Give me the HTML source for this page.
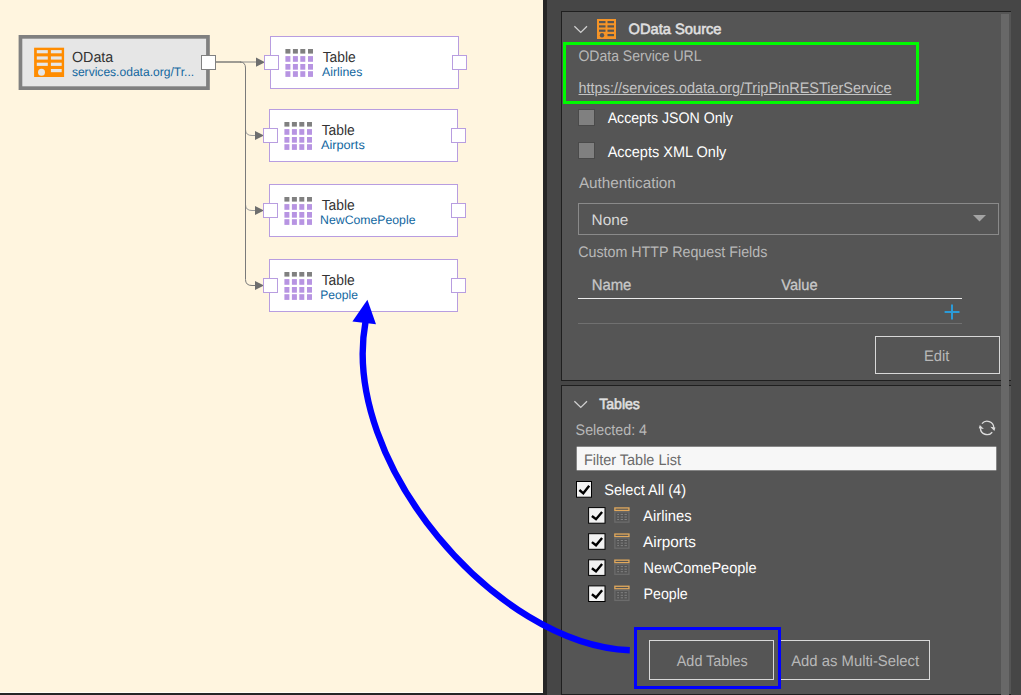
<!DOCTYPE html>
<html><head><meta charset="utf-8">
<style>
html,body{margin:0;padding:0;}
body{text-rendering:geometricPrecision;width:1021px;height:695px;position:relative;overflow:hidden;background:#262626;font-family:"Liberation Sans",sans-serif;}
.abs{position:absolute;transform-origin:0 0;}
#canvas{left:0;top:0;width:543px;height:692px;background:#fff5df;border-bottom:1px solid #fffdf6;}
#side{left:547px;top:0;width:474px;height:695px;background:#464646;}
.panel{background:#555555;border:1px solid #1f1f1f;border-right:none;box-sizing:border-box;}
.node{box-sizing:border-box;background:#fff;border:1px solid #b89de0;}
.port{box-sizing:border-box;width:15px;height:15px;background:#fff;border:1px solid #b89de0;}
.t1{font-size:14.7px;color:#333;white-space:nowrap;line-height:18px;}
.t2{font-size:12.3px;color:#12679f;white-space:nowrap;line-height:18px;}
.lbl{color:#b8b8b8;font-size:15.3px;white-space:nowrap;line-height:18px;}
.wht{color:#ffffff;font-size:15.3px;white-space:nowrap;line-height:18px;}
.hdr{font-size:14.9px;font-weight:normal;-webkit-text-stroke:0.55px #e0e0e0;color:#e0e0e0;line-height:18px;white-space:nowrap;}
.cb0{box-sizing:border-box;width:17px;height:17px;background:#808080;border:1px solid #4a4a4a;}
.btn{box-sizing:border-box;border:1px solid #d8d8d8;}
.btxt{color:#b8b8b8;font-size:15.3px;white-space:nowrap;line-height:18px;}
</style></head><body>
<div id="canvas" class="abs"></div>
<div id="side" class="abs"></div>
<svg class="abs" style="left:0;top:0" width="543" height="692" viewBox="0 0 543 692">
<g fill="none" stroke="#7a7a7a" stroke-width="1">
<path d="M216 62 H241" stroke="#6a6a6a" stroke-width="1.3"/><path d="M241 62 H258" stroke="#8a8a8a"/>
<path d="M240 62 Q245.5 62 245.5 68 V129.5"/><path d="M245.5 129.5 Q245.5 135.5 252 135.5 H258" stroke="#9c9c9c"/>
<path d="M245.5 129 V204.5"/><path d="M245.5 204.5 Q245.5 210.5 252 210.5 H258" stroke="#9c9c9c"/>
<path d="M245.5 204 V279.5 Q245.5 285.5 252 285.5 H258"/>
</g>
<g fill="#6e6e6e">
<path d="M256 57.6 L265 62.2 L256 66.8Z"/>
<path d="M255 131 L264 135.5 L255 140Z"/>
<path d="M255 206 L264 210.5 L255 215Z"/>
<path d="M255 281 L264 285.5 L255 290Z"/>
</g>
</svg>
<svg class="abs" style="left:0;top:0" width="230" height="100" viewBox="0 0 230 100"><rect x="20.45" y="36.85" width="187.5" height="51.3" fill="#e6e6e6" stroke="#808080" stroke-width="3.7"/></svg>
<svg class="abs" style="left:0;top:0" width="100" height="100" viewBox="0 0 100 100"><g transform="translate(34.1 47.7)">
<rect width="30" height="29.3" fill="#ff8c00"/>
<g fill="#e6e6e6">
<rect x="2.7" y="2.4" width="11" height="3.2"/><rect x="16.8" y="2.4" width="10.8" height="3.2"/>
<rect x="2.7" y="8.7" width="11" height="3.2"/><rect x="16.8" y="8.7" width="10.8" height="3.2"/>
<rect x="2.7" y="15" width="11" height="3.2"/><rect x="16.8" y="15" width="10.8" height="3.2"/>
<rect x="16.8" y="21.3" width="10.8" height="3.2"/>
<circle cx="7.4" cy="24.5" r="3.5"/>
</g></g></svg>
<div id="od1" class="abs tx t1" style="left:71px;top:49px;transform:translate(0.98px,0) scaleX(0.9732);">OData</div>
<div id="od2" class="abs tx t2" style="left:71px;top:63px;transform:translate(0.88px,0) scaleX(0.9809);">services.odata.org/Tr...</div>
<div class="abs port" style="left:201px;top:55px;border-color:#808080;"></div>
<div class="abs node" style="left:270px;top:36px;width:189px;height:53px;"></div>
<div class="abs port" style="left:263.5px;top:55px;"></div>
<div class="abs port" style="left:451.5px;top:55px;"></div>
<svg class="abs" style="left:285px;top:49.1px" width="28.2" height="28" viewBox="0 0 28.2 28">
<g fill="#808080"><rect x="0.4" y="0" width="5" height="4.6"/><rect x="7.9" y="0" width="5" height="4.6"/><rect x="15.3" y="0" width="5" height="4.6"/><rect x="23" y="0" width="5" height="4.6"/></g>
<g fill="#b794e2"><rect x="0.4" y="7.1" width="5" height="5.7"/><rect x="7.9" y="7.1" width="5" height="5.7"/><rect x="15.3" y="7.1" width="5" height="5.7"/><rect x="23" y="7.1" width="5" height="5.7"/><rect x="0.4" y="15" width="5" height="5.7"/><rect x="7.9" y="15" width="5" height="5.7"/><rect x="15.3" y="15" width="5" height="5.7"/><rect x="23" y="15" width="5" height="5.7"/><rect x="0.4" y="22.2" width="5" height="5.7"/><rect x="7.9" y="22.2" width="5" height="5.7"/><rect x="15.3" y="22.2" width="5" height="5.7"/><rect x="23" y="22.2" width="5" height="5.7"/></g></svg>
<div id="tb0" class="abs tx t1" style="left:322px;top:49px;transform:translate(0.64px,0) scaleX(0.9425);">Table</div>
<div id="tn0" class="abs tx t2" style="left:322px;top:63px;transform:translate(0.05px,0) scaleX(0.9990);">Airlines</div>
<div class="abs node" style="left:269px;top:109px;width:189px;height:53px;"></div>
<div class="abs port" style="left:262.5px;top:128px;"></div>
<div class="abs port" style="left:450.5px;top:128px;"></div>
<svg class="abs" style="left:284px;top:122.1px" width="28.2" height="28" viewBox="0 0 28.2 28">
<g fill="#808080"><rect x="0.4" y="0" width="5" height="4.6"/><rect x="7.9" y="0" width="5" height="4.6"/><rect x="15.3" y="0" width="5" height="4.6"/><rect x="23" y="0" width="5" height="4.6"/></g>
<g fill="#b794e2"><rect x="0.4" y="7.1" width="5" height="5.7"/><rect x="7.9" y="7.1" width="5" height="5.7"/><rect x="15.3" y="7.1" width="5" height="5.7"/><rect x="23" y="7.1" width="5" height="5.7"/><rect x="0.4" y="15" width="5" height="5.7"/><rect x="7.9" y="15" width="5" height="5.7"/><rect x="15.3" y="15" width="5" height="5.7"/><rect x="23" y="15" width="5" height="5.7"/><rect x="0.4" y="22.2" width="5" height="5.7"/><rect x="7.9" y="22.2" width="5" height="5.7"/><rect x="15.3" y="22.2" width="5" height="5.7"/><rect x="23" y="22.2" width="5" height="5.7"/></g></svg>
<div id="tb1" class="abs tx t1" style="left:321px;top:122px;transform:translate(0.64px,0) scaleX(0.9425);">Table</div>
<div id="tn1" class="abs tx t2" style="left:320px;top:136px;transform:translate(0.92px,0) scaleX(1.0347);">Airports</div>
<div class="abs node" style="left:269px;top:184px;width:189px;height:53px;"></div>
<div class="abs port" style="left:262.5px;top:203px;"></div>
<div class="abs port" style="left:450.5px;top:203px;"></div>
<svg class="abs" style="left:284px;top:197.1px" width="28.2" height="28" viewBox="0 0 28.2 28">
<g fill="#808080"><rect x="0.4" y="0" width="5" height="4.6"/><rect x="7.9" y="0" width="5" height="4.6"/><rect x="15.3" y="0" width="5" height="4.6"/><rect x="23" y="0" width="5" height="4.6"/></g>
<g fill="#b794e2"><rect x="0.4" y="7.1" width="5" height="5.7"/><rect x="7.9" y="7.1" width="5" height="5.7"/><rect x="15.3" y="7.1" width="5" height="5.7"/><rect x="23" y="7.1" width="5" height="5.7"/><rect x="0.4" y="15" width="5" height="5.7"/><rect x="7.9" y="15" width="5" height="5.7"/><rect x="15.3" y="15" width="5" height="5.7"/><rect x="23" y="15" width="5" height="5.7"/><rect x="0.4" y="22.2" width="5" height="5.7"/><rect x="7.9" y="22.2" width="5" height="5.7"/><rect x="15.3" y="22.2" width="5" height="5.7"/><rect x="23" y="22.2" width="5" height="5.7"/></g></svg>
<div id="tb2" class="abs tx t1" style="left:321px;top:197px;transform:translate(0.64px,0) scaleX(0.9425);">Table</div>
<div id="tn2" class="abs tx t2" style="left:320px;top:211px;transform:translate(0.12px,0) scaleX(0.9962);">NewComePeople</div>
<div class="abs node" style="left:269px;top:259px;width:189px;height:53px;"></div>
<div class="abs port" style="left:262.5px;top:278px;"></div>
<div class="abs port" style="left:450.5px;top:278px;"></div>
<svg class="abs" style="left:284px;top:272.1px" width="28.2" height="28" viewBox="0 0 28.2 28">
<g fill="#808080"><rect x="0.4" y="0" width="5" height="4.6"/><rect x="7.9" y="0" width="5" height="4.6"/><rect x="15.3" y="0" width="5" height="4.6"/><rect x="23" y="0" width="5" height="4.6"/></g>
<g fill="#b794e2"><rect x="0.4" y="7.1" width="5" height="5.7"/><rect x="7.9" y="7.1" width="5" height="5.7"/><rect x="15.3" y="7.1" width="5" height="5.7"/><rect x="23" y="7.1" width="5" height="5.7"/><rect x="0.4" y="15" width="5" height="5.7"/><rect x="7.9" y="15" width="5" height="5.7"/><rect x="15.3" y="15" width="5" height="5.7"/><rect x="23" y="15" width="5" height="5.7"/><rect x="0.4" y="22.2" width="5" height="5.7"/><rect x="7.9" y="22.2" width="5" height="5.7"/><rect x="15.3" y="22.2" width="5" height="5.7"/><rect x="23" y="22.2" width="5" height="5.7"/></g></svg>
<div id="tb3" class="abs tx t1" style="left:321px;top:272px;transform:translate(0.64px,0) scaleX(0.9425);">Table</div>
<div id="tn3" class="abs tx t2" style="left:320px;top:286px;transform:translate(0.28px,0) scaleX(0.9837);">People</div>
<div class="abs panel" style="left:561px;top:11px;width:450px;height:370px;"></div>
<div class="abs panel" style="left:561px;top:385px;width:450px;height:310px;"></div>
<div class="abs" style="left:1001px;top:14px;width:8px;height:681px;background:#686868;"></div>
<svg class="abs" style="left:573px;top:24px" width="16" height="10" viewBox="0 0 16 10"><path d="M1.4 2.2 L7.75 8.4 L14 2.2" fill="none" stroke="#d0d0d0" stroke-width="1.3"/></svg>
<svg class="abs" style="left:597px;top:19px" width="19" height="20" viewBox="0 0 19 20">
<rect width="19" height="20" fill="#f59427"/>
<g fill="#555">
<rect x="2" y="2" width="6.5" height="2.2"/><rect x="10.5" y="2" width="6.5" height="2.2"/>
<rect x="2" y="6.3" width="6.5" height="2.2"/><rect x="10.5" y="6.3" width="6.5" height="2.2"/>
<rect x="2" y="10.6" width="6.5" height="2.2"/><rect x="10.5" y="10.6" width="6.5" height="2.2"/>
<rect x="10.5" y="15" width="6.5" height="2.2"/><circle cx="5" cy="16.3" r="2.2"/>
</g></svg>
<div id="h1" class="abs tx hdr" style="left:628px;top:21px;transform:translate(0.49px,0) scaleX(0.9860);">OData Source</div>
<div id="l1" class="abs tx lbl" style="left:578px;top:48px;transform:translate(0.42px,0) scaleX(0.9167);">OData Service URL</div>
<div id="url" class="abs tx lbl" style="left:578px;top:80px;transform:translate(0.55px,0) scaleX(0.9448);text-decoration:underline;color:#c4c4c4;">https://services.odata.org/TripPinRESTierService</div>
<div class="abs" style="left:563px;top:42px;width:356px;height:62px;box-sizing:border-box;border:3px solid #00fa00;"></div>
<div class="abs cb0" style="left:578px;top:109px;"></div>
<div id="c1" class="abs tx wht" style="left:607px;top:110px;transform:translate(0.63px,0) scaleX(0.9258);">Accepts JSON Only</div>
<div class="abs cb0" style="left:578px;top:142px;"></div>
<div id="c2" class="abs tx wht" style="left:607px;top:144px;transform:translate(0.63px,0) scaleX(0.9479);">Accepts XML Only</div>
<div id="l2" class="abs tx lbl" style="left:578px;top:175px;transform:translate(0.91px,0) scaleX(0.9991);">Authentication</div>
<div class="abs" style="left:578px;top:203px;width:421px;height:32px;box-sizing:border-box;border:1px solid #8a8a8a;"></div>
<div id="none" class="abs tx lbl" style="left:591px;top:212px;transform:translate(0.61px,0) scaleX(1.0062);color:#d8d8d8;">None</div>
<svg class="abs" style="left:973px;top:215px" width="14" height="8" viewBox="0 0 14 8"><path d="M0 0 H13 L6.5 6.4Z" fill="#a4a4a4"/></svg>
<div id="l3" class="abs tx lbl" style="left:578px;top:244px;transform:translate(0.16px,0) scaleX(0.9324);">Custom HTTP Request Fields</div>
<div id="nm" class="abs tx lbl" style="left:591px;top:277px;transform:translate(0.63px,0) scaleX(0.9728);color:#c8c8c8;-webkit-text-stroke:0.3px #c8c8c8;">Name</div>
<div id="vl" class="abs tx lbl" style="left:781px;top:277px;transform:translate(0.34px,0) scaleX(0.9547);color:#c8c8c8;-webkit-text-stroke:0.3px #c8c8c8;">Value</div>
<div class="abs" style="left:578px;top:298px;width:384px;height:1px;background:#ececec;"></div>
<div class="abs" style="left:578px;top:323px;width:384px;height:1px;background:#707070;"></div>
<svg class="abs" style="left:944px;top:304px" width="16" height="16" viewBox="0 0 16 16"><path d="M8 0.4 V15.5 M0.6 7.9 H15.5" stroke="#2b9bd8" stroke-width="2" fill="none"/></svg>
<div class="abs btn" style="left:875px;top:336px;width:125px;height:38px;"></div>
<div id="edit" class="abs tx btxt" style="left:924px;top:348px;transform:translate(0.00px,0) scaleX(0.9613);">Edit</div>
<svg class="abs" style="left:573px;top:399px" width="16" height="10" viewBox="0 0 16 10"><path d="M1.4 2.2 L7.75 8.4 L14 2.2" fill="none" stroke="#d0d0d0" stroke-width="1.3"/></svg>
<div id="h2" class="abs tx hdr" style="left:599px;top:396px;transform:translate(0.16px,0) scaleX(0.9468);">Tables</div>
<div id="sel" class="abs tx lbl" style="left:575px;top:422px;transform:translate(0.62px,0) scaleX(0.9333);">Selected: 4</div>
<svg class="abs" style="left:0;top:0" width="1021" height="695" viewBox="0 0 1021 695"><g fill="none" stroke="#dcdcdc" stroke-width="1.35"><path d="M981.97 423.59 A6.7 6.7 0 0 1 993.80 427.67"/><path d="M992.23 432.21 A6.7 6.7 0 0 1 980.40 428.13"/></g><path d="M990.30 426.70 L995.40 427.50 L994.40 430.90Z" fill="#dcdcdc"/><path d="M983.90 429.10 L978.80 428.30 L979.80 424.90Z" fill="#dcdcdc"/></svg>
<svg class="abs" style="left:570px;top:440px" width="440" height="40" viewBox="570 440 440 40"><rect x="576.7" y="446.7" width="419.6" height="23.6" fill="#f7f7f7"/></svg>
<div id="flt" class="abs tx lbl" style="left:584px;top:452px;transform:translate(0.00px,0) scaleX(0.9446);color:#6a6a6a;">Filter Table List</div>
<div id="sa" class="abs tx wht" style="left:604px;top:482px;transform:translate(0.31px,0) scaleX(0.9519);">Select All (4)</div>
<div id="li0" class="abs tx wht" style="left:643px;top:508px;transform:translate(0.10px,0) scaleX(0.9660);">Airlines</div>
<div id="li1" class="abs tx wht" style="left:643px;top:534px;transform:translate(0.10px,0) scaleX(1.0011);">Airports</div>
<div id="li2" class="abs tx wht" style="left:643px;top:560px;transform:translate(0.56px,0) scaleX(0.9500);">NewComePeople</div>
<div id="li3" class="abs tx wht" style="left:643px;top:586px;transform:translate(0.53px,0) scaleX(0.9280);">People</div>
<svg class="abs" style="left:0;top:0" width="1021" height="695" viewBox="0 0 1021 695"><rect x="576.5" y="481.5" width="15" height="15.7" fill="#f2f2f2" stroke="#000" stroke-width="1"/><path d="M579.4 490 L583.3 493.3 L589.2 485.7" fill="none" stroke="#000" stroke-width="2.4"/><rect x="588.6" y="507.6" width="16.4" height="15.6" fill="#f2f2f2" stroke="#000" stroke-width="1"/><path d="M591.9 516 L596 519.2 L602.1 511.9" fill="none" stroke="#000" stroke-width="2.4"/><rect x="614.85" y="507.95" width="14.1" height="2.5" fill="none" stroke="#e2a95c" stroke-width="1.3"/><rect x="614.85" y="511.9" width="14.1" height="10.2" fill="none" stroke="#6c6c6c" stroke-width="1.3"/><rect x="617.2" y="513.9" width="1.8" height="1" fill="#828282"/><rect x="620.7" y="513.9" width="2.3" height="1" fill="#828282"/><rect x="624.5" y="513.9" width="2.4" height="1" fill="#828282"/><rect x="617.2" y="516.5" width="1.8" height="1" fill="#828282"/><rect x="620.7" y="516.5" width="2.3" height="1" fill="#828282"/><rect x="624.5" y="516.5" width="2.4" height="1" fill="#828282"/><rect x="617.2" y="519" width="1.8" height="1" fill="#828282"/><rect x="620.7" y="519" width="2.3" height="1" fill="#828282"/><rect x="624.5" y="519" width="2.4" height="1" fill="#828282"/><rect x="588.6" y="533.7" width="16.4" height="15.6" fill="#f2f2f2" stroke="#000" stroke-width="1"/><path d="M591.9 542.1 L596 545.3 L602.1 538" fill="none" stroke="#000" stroke-width="2.4"/><rect x="614.85" y="534.05" width="14.1" height="2.5" fill="none" stroke="#e2a95c" stroke-width="1.3"/><rect x="614.85" y="538" width="14.1" height="10.2" fill="none" stroke="#6c6c6c" stroke-width="1.3"/><rect x="617.2" y="540" width="1.8" height="1" fill="#828282"/><rect x="620.7" y="540" width="2.3" height="1" fill="#828282"/><rect x="624.5" y="540" width="2.4" height="1" fill="#828282"/><rect x="617.2" y="542.6" width="1.8" height="1" fill="#828282"/><rect x="620.7" y="542.6" width="2.3" height="1" fill="#828282"/><rect x="624.5" y="542.6" width="2.4" height="1" fill="#828282"/><rect x="617.2" y="545.1" width="1.8" height="1" fill="#828282"/><rect x="620.7" y="545.1" width="2.3" height="1" fill="#828282"/><rect x="624.5" y="545.1" width="2.4" height="1" fill="#828282"/><rect x="588.6" y="559.8" width="16.4" height="15.6" fill="#f2f2f2" stroke="#000" stroke-width="1"/><path d="M591.9 568.2 L596 571.4 L602.1 564.1" fill="none" stroke="#000" stroke-width="2.4"/><rect x="614.85" y="560.15" width="14.1" height="2.5" fill="none" stroke="#e2a95c" stroke-width="1.3"/><rect x="614.85" y="564.1" width="14.1" height="10.2" fill="none" stroke="#6c6c6c" stroke-width="1.3"/><rect x="617.2" y="566.1" width="1.8" height="1" fill="#828282"/><rect x="620.7" y="566.1" width="2.3" height="1" fill="#828282"/><rect x="624.5" y="566.1" width="2.4" height="1" fill="#828282"/><rect x="617.2" y="568.7" width="1.8" height="1" fill="#828282"/><rect x="620.7" y="568.7" width="2.3" height="1" fill="#828282"/><rect x="624.5" y="568.7" width="2.4" height="1" fill="#828282"/><rect x="617.2" y="571.2" width="1.8" height="1" fill="#828282"/><rect x="620.7" y="571.2" width="2.3" height="1" fill="#828282"/><rect x="624.5" y="571.2" width="2.4" height="1" fill="#828282"/><rect x="588.6" y="585.9" width="16.4" height="15.6" fill="#f2f2f2" stroke="#000" stroke-width="1"/><path d="M591.9 594.3 L596 597.5 L602.1 590.2" fill="none" stroke="#000" stroke-width="2.4"/><rect x="614.85" y="586.25" width="14.1" height="2.5" fill="none" stroke="#e2a95c" stroke-width="1.3"/><rect x="614.85" y="590.2" width="14.1" height="10.2" fill="none" stroke="#6c6c6c" stroke-width="1.3"/><rect x="617.2" y="592.2" width="1.8" height="1" fill="#828282"/><rect x="620.7" y="592.2" width="2.3" height="1" fill="#828282"/><rect x="624.5" y="592.2" width="2.4" height="1" fill="#828282"/><rect x="617.2" y="594.8" width="1.8" height="1" fill="#828282"/><rect x="620.7" y="594.8" width="2.3" height="1" fill="#828282"/><rect x="624.5" y="594.8" width="2.4" height="1" fill="#828282"/><rect x="617.2" y="597.3" width="1.8" height="1" fill="#828282"/><rect x="620.7" y="597.3" width="2.3" height="1" fill="#828282"/><rect x="624.5" y="597.3" width="2.4" height="1" fill="#828282"/></svg>
<div class="abs btn" style="left:649px;top:640px;width:125px;height:40px;"></div>
<div id="b1" class="abs tx btxt" style="left:676px;top:653px;transform:translate(0.77px,0) scaleX(0.9411);">Add Tables</div>
<div class="abs btn" style="left:778px;top:640px;width:152px;height:40px;"></div>
<div id="b2" class="abs tx btxt" style="left:791px;top:653px;transform:translate(0.21px,0) scaleX(0.9705);">Add as Multi-Select</div>
<div class="abs" style="left:634px;top:627px;width:147px;height:62px;box-sizing:border-box;border:3px solid #0000ff;"></div>
<svg class="abs" style="left:0;top:0" width="1021" height="695" viewBox="0 0 1021 695">
<path d="M629.8 650.3 C 496.1 645 339.9 462.4 365.5 321.9" fill="none" stroke="#0000ff" stroke-width="6.4"/>
<path d="M367.4 299.8 L352.4 321.4 L376 324.3Z" fill="#0000ff"/>
</svg>
</body></html>
